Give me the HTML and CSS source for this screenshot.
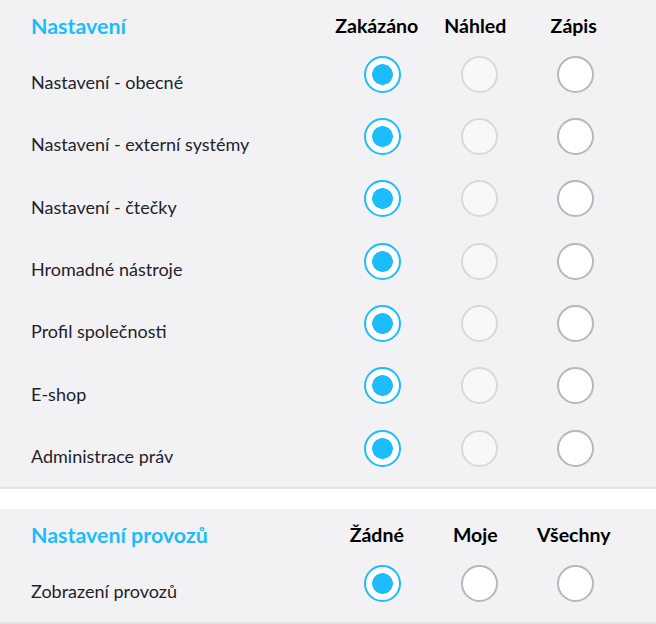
FILE: index.html
```html
<!DOCTYPE html>
<html lang="cs">
<head>
<meta charset="utf-8">
<link rel="stylesheet" href="styles.css">
</head>
<body>
<section class="panel">
  <div class="head">
    <h2 class="title">Nastavení</h2>
    <div class="cols">
      <span>Zakázáno</span><span>Náhled</span><span>Zápis</span>
    </div>
  </div>
  <div class="row"><span class="label">Nastavení - obecné</span><div class="radios"><span class="radio on"></span><span class="radio dis"></span><span class="radio"></span></div></div>
  <div class="row"><span class="label">Nastavení - externí systémy</span><div class="radios"><span class="radio on"></span><span class="radio dis"></span><span class="radio"></span></div></div>
  <div class="row"><span class="label">Nastavení - čtečky</span><div class="radios"><span class="radio on"></span><span class="radio dis"></span><span class="radio"></span></div></div>
  <div class="row"><span class="label">Hromadné nástroje</span><div class="radios"><span class="radio on"></span><span class="radio dis"></span><span class="radio"></span></div></div>
  <div class="row"><span class="label">Profil společnosti</span><div class="radios"><span class="radio on"></span><span class="radio dis"></span><span class="radio"></span></div></div>
  <div class="row"><span class="label">E-shop</span><div class="radios"><span class="radio on"></span><span class="radio dis"></span><span class="radio"></span></div></div>
  <div class="row"><span class="label">Administrace práv</span><div class="radios"><span class="radio on"></span><span class="radio dis"></span><span class="radio"></span></div></div>
</section>
<section class="panel second">
  <div class="head">
    <h2 class="title">Nastavení provozů</h2>
    <div class="cols">
      <span>Žádné</span><span>Moje</span><span>Všechny</span>
    </div>
  </div>
  <div class="row"><span class="label">Zobrazení provozů</span><div class="radios"><span class="radio on"></span><span class="radio"></span><span class="radio"></span></div></div>
</section>
</body>
</html>
```
FILE: styles.css
```css
html, body {
  margin: 0;
  padding: 0;
  background: #ffffff;
}
body {
  font-family: "Lato", "Noto Sans", sans-serif;
  color: #231f2b;
}
.panel {
  background: #f2f2f5;
  border-bottom: 2px solid #e4e4e7;
  padding: 8px 0 8px 31px;
}
.second {
  margin-top: 20px;
  padding-bottom: 7px;
}
.head {
  display: flex;
  align-items: center;
  height: 35px;
}
.title {
  flex: 1;
  margin: 0;
  font-size: 21.4px;
  font-weight: 700;
  color: #1cbcfd;
}
.cols {
  display: flex;
  padding-right: 33px;
}
.cols span {
  width: 98.5px;
  text-align: center;
  font-size: 19.5px;
  font-weight: 700;
  color: #000;
}
.row {
  display: flex;
  align-items: center;
  height: 62.33px;
}
.label {
  flex: 1;
  font-size: 18px;
  padding-top: 16px;
}
.radios {
  display: flex;
  padding-right: 32px;
}
.radio {
  width: 96.5px;
  display: flex;
  justify-content: center;
}
.radio::before {
  content: "";
  box-sizing: border-box;
  width: 37px;
  height: 37px;
  border-radius: 50%;
  border: 2px solid #b8b8bc;
  background: #ffffff;
}
.radio.dis::before {
  border-color: #d9d9db;
  background: #f8f8f8;
}
.radio.on::before {
  border-color: #1cbcfd;
  background: radial-gradient(circle, #1cbcfd 0 10px, #ffffff 10.6px);
}
```
